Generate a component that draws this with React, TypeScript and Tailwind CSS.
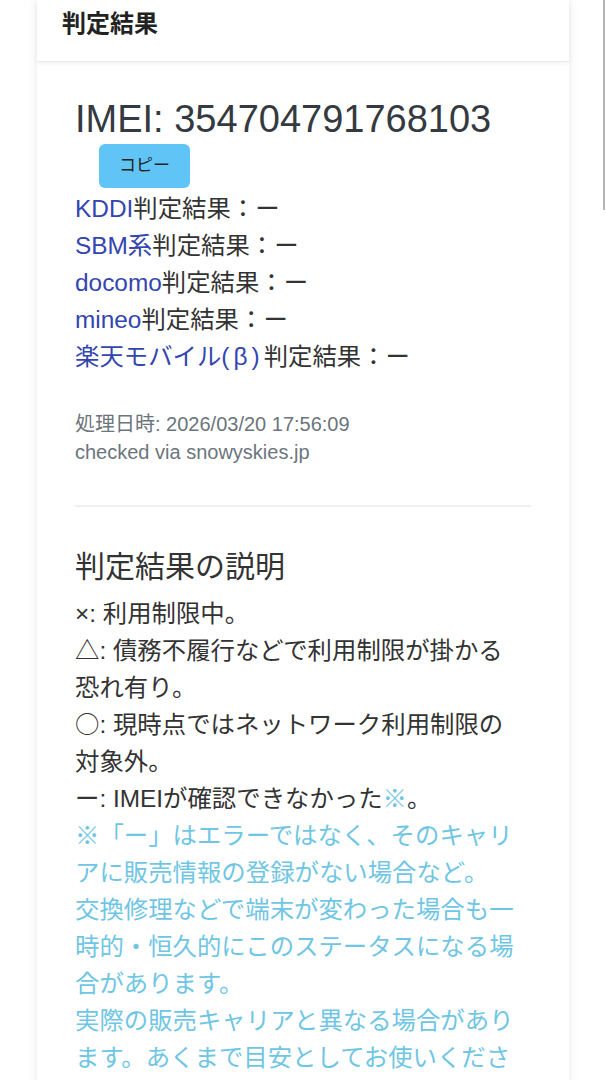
export default function App() {
  const font = { fontFamily: '"Liberation Sans", "Noto Sans CJK JP", sans-serif' };
  return (
    <div className="relative min-h-[1080px] h-[1080px] overflow-hidden bg-white" style={font}>
      <div className="px-[37px]">
        <div className="w-[532px] bg-white shadow-[0_0_10px_rgba(0,0,0,0.09)]">
          <div className="h-[62px] border-b border-[#ebebeb] shadow-[0_2px_4px_rgba(0,0,0,0.05)] px-[25px] pt-[6px]">
            <div className="text-[24px] font-bold leading-[36px] text-[#222]">判定結果</div>
          </div>
          <div className="px-[38px] pt-[34px] pb-[40px]">
            <div className="text-[38px] leading-[46px] text-[#343a40]">IMEI: 354704791768103</div>
            <button className="mt-[2px] ml-[24px] flex h-[44px] w-[91px] items-center justify-center rounded-[6px] bg-[#61c4f6] text-[17px] text-[#222]">
              コピー
            </button>
            <div className="mt-[2px] text-[24.4px] leading-[37px] text-[#333]">
              <div className="h-[37px]"><span className="text-[#3346b0]">KDDI</span>判定結果：ー</div>
              <div className="h-[37px]"><span className="text-[#3346b0]">SBM系</span>判定結果：ー</div>
              <div className="h-[37px]"><span className="text-[#3346b0]">docomo</span>判定結果：ー</div>
              <div className="h-[37px]"><span className="text-[#3346b0]">mineo</span>判定結果：ー</div>
              <div className="h-[37px]">
                <span className="text-[#3346b0]">
                  楽天モバイル<span className="leading-none tracking-[4px]">(β)</span>
                </span>
                判定結果：ー
              </div>
            </div>
            <div className="mt-[35px] text-[20px] leading-[28px] text-[#6c757d]">
              <div>処理日時: 2026/03/20 17:56:09</div>
              <div>checked via snowyskies.jp</div>
            </div>
            <div className="mt-[39px] h-[2px] bg-[#efefef]" />
            <div className="mt-[40px] text-[30px] leading-[40px] text-[#333]">判定結果の説明</div>
            <div className="mt-[8px] w-[448px] text-[24.4px] leading-[37px] text-[#333]">
              ×: 利用制限中。<br />
              <span className="font-['Noto_Sans_CJK_JP'] leading-none">△</span>: 債務不履行などで利用制限が掛かる恐れ有り。<br />
              <span className="font-['Noto_Sans_CJK_JP'] leading-none">○</span>: 現時点ではネットワーク利用制限の対象外。<br />
              ー: IMEIが確認できなかった<span className="text-[#6fc6e4]">※</span>。<br />
              <span className="text-[#6fc6e4]">
                ※「ー」はエラーではなく、そのキャリアに販売情報の登録がない場合など。<br />
                交換修理などで端末が変わった場合も一時的・恒久的にこのステータスになる場合があります。<br />
                実際の販売キャリアと異なる場合があります。あくまで目安としてお使いください。
              </span>
            </div>
          </div>
        </div>
      </div>
      <div className="absolute right-[1px] top-0 h-[210px] w-[2px] bg-[#b5b5b5]" />
    </div>
  );
}
